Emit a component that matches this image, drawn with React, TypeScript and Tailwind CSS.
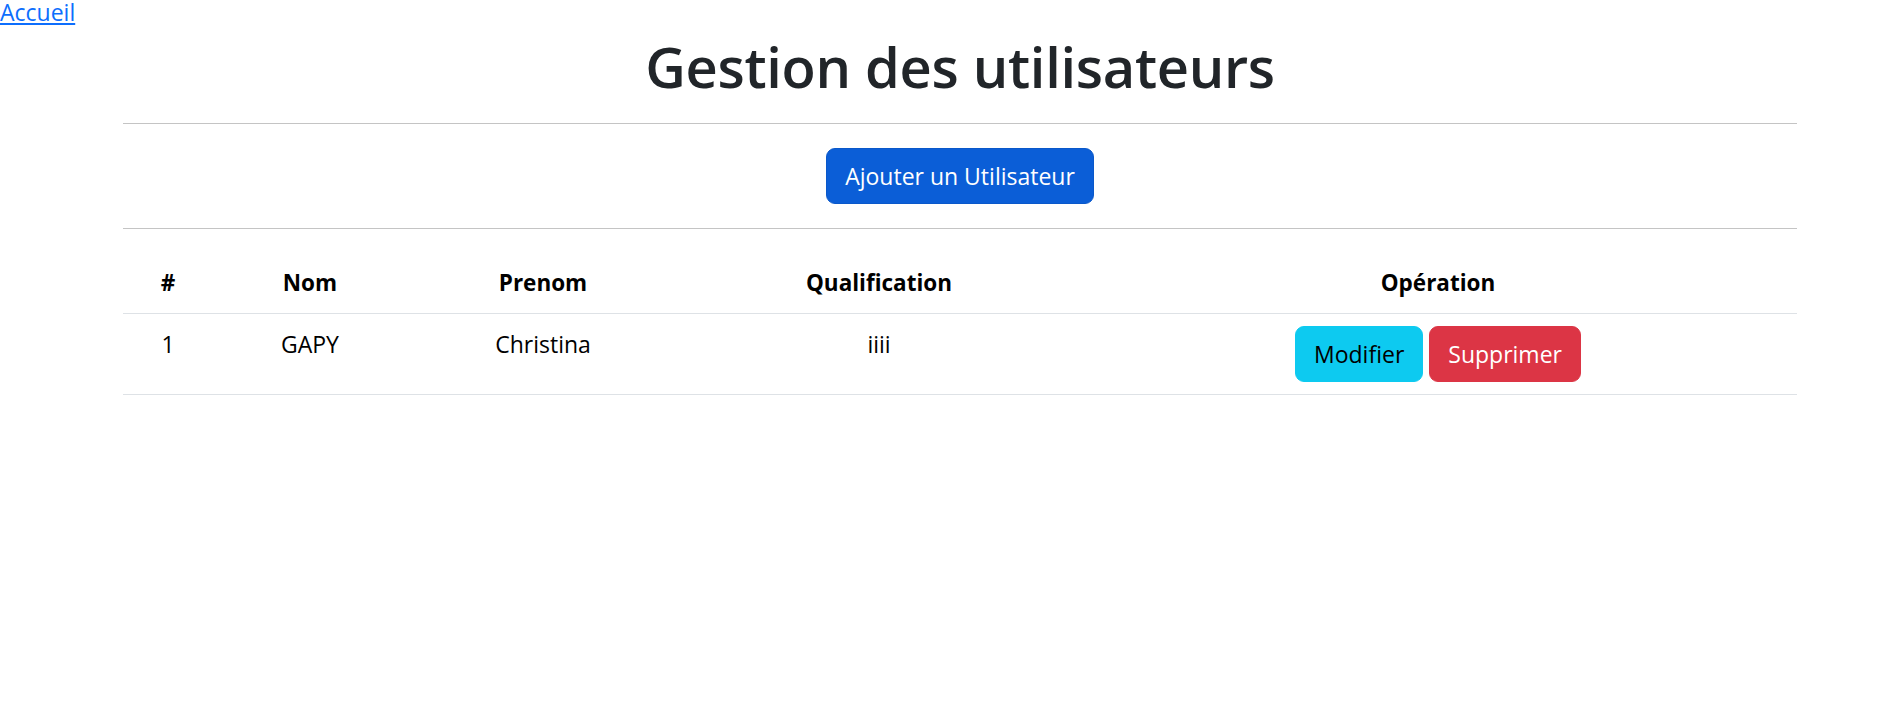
import React from 'react';

const users = [{ id: 1, nom: 'GAPY', prenom: 'Christina', qualification: 'iiii' }];

const App: React.FC = () => {
  return (
    <div className="min-h-screen bg-white font-['Open_Sans','Noto_Sans',sans-serif] text-[23px] leading-[36px] text-[#212529]">
      <div className="h-9">
        <a href="#" className="inline-block align-top leading-[25px] text-[#0d6efd] underline">
          Accueil
        </a>
      </div>
      <div className="ml-[123px] w-[1674px]">
        <h1 className="mb-[27px] text-center text-[56px] leading-[60px] tracking-[-0.3px] font-semibold text-[#212529]">
          Gestion des utilisateurs
        </h1>
        <hr className="border-t border-[#c4c4c4]" />
        <div className="my-6 flex justify-center">
          <button className="rounded-[9px] border border-[#0a58ca] bg-[#0b5ed7] px-[18px] py-[9px] text-[23px] leading-[36px] text-white">
            Ajouter un Utilisateur
          </button>
        </div>
        <hr className="border-t border-[#c4c4c4]" />

        {/* Users table */}
        <table className="mt-6 w-full border-collapse text-center text-black">
          <thead>
            <tr className="border-b border-[#dee2e6] text-[22.5px]">
              <th className="w-[90px] p-3 font-bold">#</th>
              <th className="w-[194px] p-3 font-bold">Nom</th>
              <th className="w-[272px] p-3 font-bold">Prenom</th>
              <th className="w-[400px] p-3 font-bold">Qualification</th>
              <th className="p-3 font-bold">Opération</th>
            </tr>
          </thead>
          <tbody>
            {users.map((u) => (
              <tr key={u.id} className="border-b border-[#dee2e6]">
                <td className="p-3 align-top">{u.id}</td>
                <td className="p-3 align-top">{u.nom}</td>
                <td className="p-3 align-top">{u.prenom}</td>
                <td className="p-3 align-top">{u.qualification}</td>
                <td className="p-3 align-top">
                  <div className="flex justify-center gap-[6px]">
                    <button className="rounded-[9px] border border-[#0dcaf0] bg-[#0dcaf0] px-[18px] py-[9px] text-[23px] leading-[36px] text-black">
                      Modifier
                    </button>
                    <button className="rounded-[9px] border border-[#dc3545] bg-[#dc3545] px-[18px] py-[9px] text-[23px] leading-[36px] text-white">
                      Supprimer
                    </button>
                  </div>
                </td>
              </tr>
            ))}
          </tbody>
        </table>
      </div>
    </div>
  );
};

export default App;
